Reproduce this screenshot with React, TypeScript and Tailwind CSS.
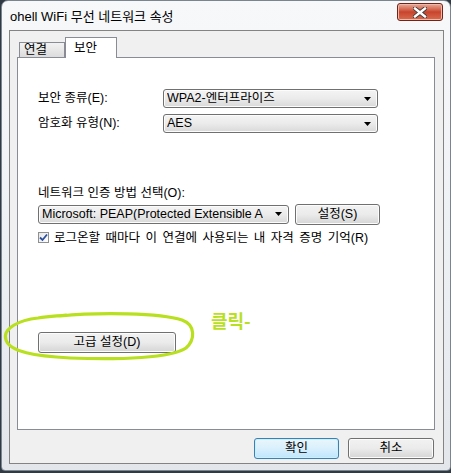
import React from 'react';

const FONT = { fontFamily: '"Liberation Sans", "Noto Sans CJK KR", sans-serif' };

const Arrow = () => (
  <svg width="7" height="4" viewBox="0 0 7 4" className="shrink-0">
    <path d="M0 0h7L3.5 4z" fill="#000" />
  </svg>
);

const Select: React.FC<{ value: string; width: string }> = ({ value, width }) => (
  <div
    className={`${width} h-[19px] flex items-center justify-between pl-[3px] pr-[6px] rounded-[3px] border border-[#707070] bg-gradient-to-b from-[#f4f4f4] via-[#ebebeb] to-[#d9d9d9] shadow-[inset_0_0_0_1px_#fcfcfc] text-[12.5px] leading-none text-black`}
  >
    <span className="whitespace-nowrap overflow-hidden">{value}</span>
    <Arrow />
  </div>
);

const Button: React.FC<{ label: string; width: string; primary?: boolean }> = ({ label, width, primary }) => (
  <div
    className={`${width} h-[21px] flex items-center justify-center rounded-[3px] border text-[12.5px] leading-none text-black ${
      primary
        ? 'border-[#3c7fb1] bg-gradient-to-b from-[#eaf6fd] via-[#d9f0fc] to-[#bee6fd] shadow-[inset_0_0_0_1px_#c8f0fd]'
        : 'border-[#707070] bg-gradient-to-b from-[#f2f2f2] via-[#ebebeb] to-[#d5d5d5] shadow-[inset_0_0_0_1px_#fcfcfc]'
    }`}
  >
    {label}
  </div>
);

export default function App() {
  return (
    <div
      className="relative w-[451px] h-[473px] overflow-hidden bg-[#2f3a44]"
      style={FONT}
    >
      <div className="w-[450px] h-[471px] ml-[1px] rounded-t-[7px] rounded-b-[4px] border border-[#7b8590] bg-gradient-to-b from-[#f7f8fa] via-[#eef1f4] to-[#e3e7ec] flex flex-col">
        {/* Title bar */}
        <div className="h-[29px] flex items-start justify-between pl-[8px] pr-[7px]">
          <span className="mt-[9px] text-[13px] leading-none text-black whitespace-nowrap">
            ohell WiFi 무선 네트워크 속성
          </span>
          <div className="mt-[2px] w-[46px] h-[18px] rounded-[3px] border border-[#6e2418] bg-gradient-to-b from-[#e9a997] via-[#c8442c] to-[#d86a4f] flex items-center justify-center shadow-[inset_0_0_0_1px_#f0b8a8]">
            <svg width="14" height="11" viewBox="0 0 14 11">
              <path d="M2 1.5 L12 9.5 M12 1.5 L2 9.5" stroke="#3b3b3b" strokeWidth="4.2" strokeLinecap="square" />
              <path d="M2 1.5 L12 9.5 M12 1.5 L2 9.5" stroke="#ffffff" strokeWidth="2.4" strokeLinecap="square" />
            </svg>
          </div>
        </div>

        {/* Client area */}
        <div className="ml-[7px] w-[435px] h-[434px] border border-[#838383] bg-[#f0f0f0] pl-[7px] pr-[9px] pt-[6px] flex flex-col">
          {/* Tabs */}
          <div className="h-[20px] flex items-end pl-[2px]">
            <div className="w-[46px] h-[15px] border border-b-0 border-[#898c95] bg-gradient-to-b from-[#f2f2f2] to-[#dcdcdc] text-[12.5px] leading-none flex items-center pl-[4px] text-black">
              연결
            </div>
            <div className="relative z-10 w-[52px] h-[21px] -mb-[1px] border border-b-0 border-[#898c95] bg-white text-[12.5px] leading-none pt-[4px] pl-[8px] text-black">
              보안
            </div>
          </div>

          {/* Panel */}
          <div className="w-[418px] h-[373px] border border-[#898c95] bg-white pl-[20px] pt-[31px] flex flex-col text-[12.5px] leading-none text-black">
            <div className="flex items-center h-[19px]">
              <span className="w-[125px]">보안 종류(E):</span>
              <Select value="WPA2-엔터프라이즈" width="w-[215px]" />
            </div>
            <div className="flex items-center h-[19px] mt-[6px]">
              <span className="w-[125px]">암호화 유형(N):</span>
              <Select value="AES" width="w-[215px]" />
            </div>

            <div className="mt-[54px]">네트워크 인증 방법 선택(O):</div>
            <div className="flex items-center mt-[4px] gap-[6px]">
              <Select value="Microsoft: PEAP(Protected Extensible A" width="w-[251px]" />
              <Button label="설정(S)" width="w-[85px]" />
            </div>
            <div className="flex items-center mt-[7px] gap-[5px]">
              <div className="w-[11px] h-[11px] border border-[#8e8f8f] bg-gradient-to-br from-[#e6e6e6] to-white flex items-center justify-center">
                <svg width="9" height="9" viewBox="0 0 9 9">
                  <path d="M1 4.5 L3.5 7 L8 1.5" stroke="#2a4f9e" strokeWidth="1.8" fill="none" />
                </svg>
              </div>
              <span className="whitespace-nowrap [word-spacing:2px]">
                로그온할 때마다 이 연결에 사용되는 내 자격 증명 기억(R)
              </span>
            </div>

            <div className="mt-[88px]">
              <Button label="고급 설정(D)" width="w-[138px]" />
            </div>
          </div>

          {/* Bottom buttons */}
          <div className="flex justify-end gap-[9px] mt-[8px]">
            <Button label="확인" width="w-[85px]" primary />
            <Button label="취소" width="w-[86px]" />
          </div>
        </div>
      </div>

      {/* Annotation overlay */}
      <svg className="absolute left-0 top-[310px]" width="200" height="52" viewBox="0 0 200 52">
        <path
          d="M60 6 C100 2 160 3 182 10 C196 15 195 30 186 38 C172 48 120 50 70 48 C35 46 10 42 6 30 C2 18 20 10 38 8 C50 6 58 6 66 5"
          stroke="#b8e01e"
          strokeWidth="3.2"
          fill="none"
          strokeLinecap="round"
        />
      </svg>
      <span
        className="absolute left-[211px] top-[311px] text-[18px] font-bold leading-none text-[#b8e01e]"
        style={{ fontFamily: '"Noto Sans CJK KR", sans-serif' }}
      >
        클릭-
      </span>
    </div>
  );
}
